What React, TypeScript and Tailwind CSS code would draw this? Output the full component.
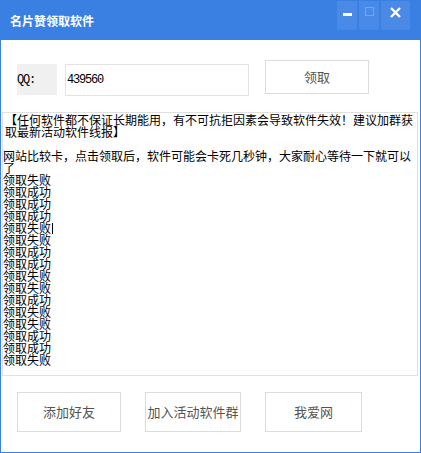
import React from "react";

const items = [
  "领取失败",
  "领取成功",
  "领取成功",
  "领取成功",
  "领取失败",
  "领取失败",
  "领取成功",
  "领取成功",
  "领取失败",
  "领取失败",
  "领取成功",
  "领取失败",
  "领取失败",
  "领取成功",
  "领取成功",
  "领取失败",
];

const cjk = { fontFamily: '"Noto Sans CJK SC", sans-serif' };

export default function App() {
  return (
    <div
      className="w-[421px] h-[453px] border border-[#3a80e3] bg-white flex flex-col overflow-hidden"
      style={cjk}
    >
      {/* title bar */}
      <div className="h-[39px] bg-[#3a80e3] flex items-start shrink-0">
        <div className="mt-[13px] ml-[9px] text-[12px] leading-[14px] font-bold text-white">
          名片赞领取软件
        </div>
        <div className="ml-auto mr-[10px] flex gap-[2px]">
          <div className="w-[20px] h-[29px] bg-[#4a8ae6] flex justify-center">
            <div className="mt-[12px] w-[9px] h-[3px] bg-white" />
          </div>
          <div className="w-[20px] h-[29px] bg-[#4a8ae6] flex justify-center">
            <div className="mt-[6px] w-[9px] h-[9px] border border-[#74a6ec]" />
          </div>
          <div className="w-[29px] h-[29px] bg-[#4a8ae6] flex justify-center">
            <svg width="11" height="11" viewBox="0 0 11 11" className="mt-[6px]">
              <path d="M1 1 L10 10 M10 1 L1 10" stroke="white" strokeWidth="2.4" />
            </svg>
          </div>
        </div>
      </div>

      {/* QQ row */}
      <div className="h-[72px] shrink-0 flex items-start pl-[16px]">
        <div
          className="mt-[24px] w-[40px] h-[31px] bg-[#f0f0f0] flex items-center text-[12px] text-black tracking-[-1.2px]"
          style={{ fontFamily: '"Liberation Mono", monospace' }}
        >
          QQ:
        </div>
        <div
          className="mt-[24px] ml-[8px] w-[184px] h-[32px] border border-[#e3e3e3] flex items-center pl-[1px] text-[12px] text-black tracking-[-1.2px]"
          style={{ fontFamily: '"Liberation Mono", monospace' }}
        >
          439560
        </div>
        <button
          className="mt-[20px] ml-[16px] w-[104px] h-[34px] border border-[#dcdcdc] bg-white flex items-center justify-center text-[13px] text-[#555]"
          style={cjk}
        >
          领取
        </button>
      </div>

      {/* log area */}
      <div className="ml-[1px] mr-[2px] h-[264px] shrink-0 border border-[#e0e0e0] pt-[1px] text-[12px] leading-[12px] text-black overflow-hidden">
        <div className="pl-[2px]">
          【任何软件都不保证长期能用，有不可抗拒因素会导致软件失效！建议加群获取最新活动软件线报】
        </div>
        <div className="h-[12px]" />
        <div>
          网站比较卡，点击领取后，软件可能会卡死几秒钟，大家耐心等待一下就可以了
        </div>
        {items.map((t, i) => (
          <div key={i} className="flex items-center">
            <span>{t}</span>
            {i === 4 && <span className="ml-[1px] w-px h-[11px] bg-black" />}
          </div>
        ))}
      </div>

      {/* bottom buttons */}
      <div className="mt-[16px] pl-[16px] flex gap-[24px]">
        <button className="w-[104px] h-[40px] border border-[#dcdcdc] bg-white flex items-center justify-center text-[13px] text-[#555]" style={cjk}>
          添加好友
        </button>
        <button className="w-[96px] h-[40px] border border-[#dcdcdc] bg-white flex items-center justify-center text-[13px] text-[#555]" style={cjk}>
          加入活动软件群
        </button>
        <button className="w-[97px] h-[40px] border border-[#dcdcdc] bg-white flex items-center justify-center text-[13px] text-[#555]" style={cjk}>
          我爱网
        </button>
      </div>
    </div>
  );
}
